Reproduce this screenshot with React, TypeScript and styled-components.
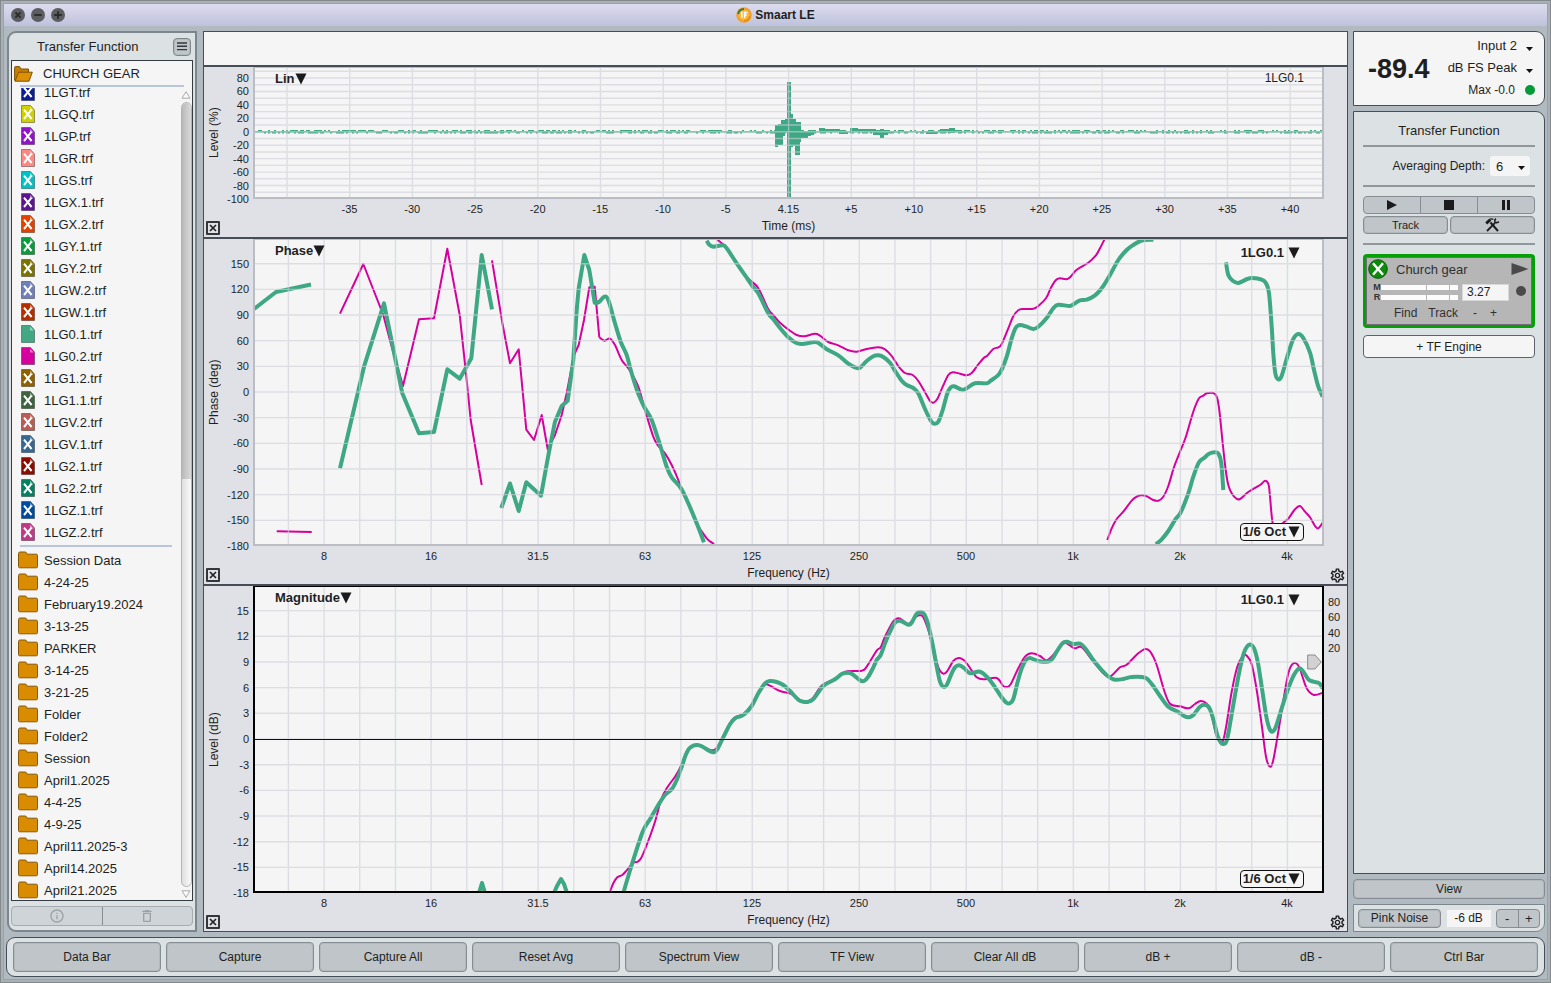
import React from "react";
import styled, { createGlobalStyle, css } from "styled-components";
import { MdDeleteOutline, MdInfoOutline, MdOutlineSettings } from "react-icons/md";

const color = {
  frame: "#b1bac0",
  panel: "#dce1e4",
  plotPanel: "#e0e1e6",
  paper: "#f5f5f5",
  edge: "#454e57",
  softEdge: "#7d868c",
  button: "#bfc5c9",
  text: "#1e1f22",
  green: "#3ea783",
  pink: "#d6009e",
  rule: "#92979c",
};

const GlobalStyle = createGlobalStyle`
  * { box-sizing: border-box; }
  body {
    margin: 0;
    font-family: "Liberation Sans", Arial, sans-serif;
    font-size: 13px;
    color: ${color.text};
    background: ${color.frame};
  }
  button, input, select { font-family: inherit; color: inherit; margin: 0; }
`;

/* ---------- window frame ---------- */

const Window = styled.div`
  height: 100vh;
  min-height: 720px;
  display: flex;
  flex-direction: column;
  background: ${color.frame};
  border: 1px solid #83898d;
  box-shadow: inset 0 0 0 2px #a9b1b6, inset 0 0 0 3px #9aa3a9;
  padding: 3px 5px 5px;
`;

const TitleBar = styled.header`
  height: 22px;
  margin: 0 -2px 5px;
  padding: 0 7px;
  display: grid;
  grid-template-columns: 1fr auto 1fr;
  align-items: center;
  background: linear-gradient(#dcdcee, #bfc2dc);
`;

const TrafficLights = styled.div`
  display: flex;
  gap: 6px;
`;

const TrafficButton = styled.button`
  width: 14px;
  height: 14px;
  padding: 0;
  border: 0;
  border-radius: 50%;
  background: #5b5d60;
  display: flex;
`;

const AppName = styled.h1`
  margin: 0;
  display: flex;
  align-items: center;
  gap: 3px;
  font-size: 12px;
  font-weight: bold;
`;

const Main = styled.main`
  flex: 1;
  min-height: 0;
  display: flex;
  gap: 6px;
  padding-left: 1px;
`;

const buttonLook = css`
  background: ${color.button};
  border: 1px solid #868e93;
  box-shadow: inset 0 0 0 1px #b3babe;
  border-radius: 4px;
  padding: 0;
  display: flex;
  align-items: center;
  justify-content: center;
`;

const PlainButton = styled.button<{ $h?: number; $size?: number }>`
  ${buttonLook}
  height: ${(p) => p.$h ?? 18}px;
  font-size: ${(p) => p.$size ?? 12}px;
`;

/* ---------- data bar ---------- */

const DataBar = styled.aside`
  width: 190px;
  flex: none;
  display: flex;
  flex-direction: column;
  background: ${color.panel};
  border: 2px solid ${color.softEdge};
  border-radius: 9px 0 0 9px;
  padding: 0 2px 4px;
`;

const DataBarHead = styled.div`
  height: 27px;
  display: flex;
  align-items: center;
  justify-content: space-between;
  padding: 0 2px 0 26px;
`;

const PanelTitle = styled.h2<{ $center?: boolean }>`
  margin: 0;
  font-size: 13px;
  line-height: 16px;
  font-weight: normal;
  text-align: ${(p) => (p.$center ? "center" : "left")};
`;

const MenuButton = styled.button`
  ${buttonLook}
  width: 18px;
  height: 18px;
  border-color: #7f878c;
`;

const ListBox = styled.div`
  flex: 1;
  min-height: 0;
  display: flex;
  flex-direction: column;
  border: 1px solid #353d44;
  background: ${color.paper};
`;

const SessionRow = styled.div`
  height: 24px;
  display: flex;
  align-items: center;
  gap: 10px;
  padding: 1px 0 0 2px;
`;

const Divider = styled.hr<{ $inset: number; $gap: number }>`
  flex: none;
  height: 2px;
  border: 0;
  margin: ${(p) => p.$gap}px ${(p) => p.$inset}px ${(p) => p.$gap}px 8px;
  background: #b8c5da;
`;

const ListBody = styled.div`
  flex: 1;
  min-height: 0;
  display: flex;
`;

const ListClip = styled.div`
  flex: 1;
  min-width: 0;
  margin-top: 1px;
  overflow: hidden;
`;

const ListScroll = styled.div`
  margin-top: -7px;
`;

const Items = styled.ul`
  list-style: none;
  margin: 0;
  padding: 0;
`;

const ItemButton = styled.button`
  width: 100%;
  height: 22px;
  padding: 0 0 0 6px;
  border: 0;
  background: none;
  display: grid;
  grid-template-columns: 20px 1fr;
  gap: 6px;
  align-items: center;
  justify-items: start;
  font-size: 13px;
  svg { justify-self: center; }
`;

const ScrollColumn = styled.div`
  width: 12px;
  padding: 4px 0 2px;
  display: flex;
  flex-direction: column;
  align-items: center;
  gap: 3px;
`;

const ScrollTrack = styled.div`
  flex: 1;
  width: 11px;
  border: 1px solid #b3b3b3;
  border-radius: 6px;
  background: linear-gradient(90deg, #dedede, #fafafa);
  overflow: hidden;
`;

const ScrollThumb = styled.div`
  height: 48%;
  border-radius: 5px 5px 0 0;
  background: linear-gradient(90deg, #b9b9b9, #d9d9d9);
`;

const Split = styled.div<{ $h: number; $muted?: boolean; $w?: number }>`
  flex: none;
  display: flex;
  height: ${(p) => p.$h}px;
  ${(p) => (p.$w ? `width: ${p.$w}px;` : "")}
  background: ${(p) => (p.$muted ? "#ced4d8" : color.button)};
  border: 1px solid ${(p) => (p.$muted ? "#a6adb1" : "#868e93")};
  border-radius: 4px;
  color: ${(p) => (p.$muted ? "#9ba2a6" : color.text)};
`;

const SplitButton = styled.button<{ $muted?: boolean }>`
  flex: 1;
  padding: 0;
  border: 0;
  background: none;
  display: flex;
  align-items: center;
  justify-content: center;
  font-size: 13px;
  & + & { border-left: 1px solid ${(p) => (p.$muted ? "#a6adb1" : "#868e93")}; }
`;

/* ---------- plots ---------- */

const PlotArea = styled.section`
  flex: 1;
  min-width: 0;
  display: flex;
  flex-direction: column;
  border: 1px solid ${color.edge};
  background: ${color.plotPanel};
`;

const PlotHeader = styled.div`
  height: 33px;
  flex: none;
  background: ${color.paper};
`;

const Graph = styled.section<{ $grow: number }>`
  flex: ${(p) => p.$grow} 1 0;
  min-height: 0;
  box-sizing: content-box;
  border-top: 2px solid ${color.edge};
  display: grid;
  grid-template-columns: 20px 29px 1fr 23px;
  grid-template-rows: minmax(0, 1fr) 20px 18px;
`;

const YTitle = styled.div`
  writing-mode: vertical-rl;
  transform: rotate(180deg);
  text-align: center;
  font-size: 12px;
  line-height: 20px;
`;

const Plot = styled.div<{ $active?: boolean }>`
  position: relative;
  min-height: 0;
  border: 2px solid ${(p) => (p.$active ? "#000" : "#babdc3")};
  border-top-width: 1px;
  background: ${color.paper};
`;

const Canvas = styled.svg`
  display: block;
  width: 100%;
  height: 100%;
  position: absolute;
  inset: 0;
`;

const Ticks = styled.svg`
  display: block;
  width: 100%;
  height: 100%;
  min-height: 0;
  overflow: visible;
  font-size: 11px;
  fill: ${color.text};
`;

const PlotCaption = styled.div<{ $side: "left" | "right" }>`
  position: absolute;
  top: 3px;
  ${(p) => (p.$side === "left" ? "left: 20px;" : "right: 18px;")}
  font-size: 12px;
  line-height: 14px;
`;

const PlotMenu = styled.button<{ $at: "title" | "trace" | "smoothing" }>`
  position: absolute;
  display: flex;
  align-items: center;
  padding: 0;
  border: 0;
  background: none;
  font-size: 13px;
  font-weight: bold;
  line-height: 16px;
  ${(p) =>
    p.$at === "title" &&
    css`
      top: 3px;
      left: 20px;
    `}
  ${(p) =>
    p.$at === "trace" &&
    css`
      top: 5px;
      right: 22px;
      gap: 4px;
    `}
  ${(p) =>
    p.$at === "smoothing" &&
    css`
      bottom: 3px;
      right: 18px;
      gap: 2px;
      padding: 0 3px 0 2px;
      border: 1px solid #111;
      border-radius: 4px;
      background: ${color.paper};
    `}
`;

const PhaseMarker = styled.svg`
  position: absolute;
  right: 0;
  top: 22%;
`;

const GraphFoot = styled.div`
  grid-column: 1 / -1;
  display: grid;
  grid-template-columns: 49px 1fr 23px;
  align-items: center;
`;

const XTitle = styled.div`
  text-align: center;
  font-size: 12px;
  line-height: 14px;
  align-self: start;
`;

const CloseBox = styled.button`
  width: 14px;
  height: 14px;
  margin-left: 2px;
  padding: 0;
  border: 2px solid #33373c;
  border-radius: 1px;
  background: none;
  display: flex;
`;

const GearButton = styled.button`
  padding: 0;
  border: 0;
  background: none;
  display: flex;
  font-size: 17px;
  margin-left: 5px;
`;

/* ---------- control bar ---------- */

const ControlBar = styled.aside`
  width: 192px;
  flex: none;
  margin-left: -1px;
  display: flex;
  flex-direction: column;
`;

const Meter = styled.section`
  height: 75px;
  flex: none;
  margin-bottom: 5px;
  display: flex;
  align-items: center;
  padding: 0 9px 0 14px;
  background: ${color.paper};
  border: 1px solid ${color.edge};
  border-radius: 0 9px 9px 0;
`;

const Level = styled.output`
  padding-top: 2px;
  font-size: 27px;
  font-weight: bold;
`;

const MeterSide = styled.div`
  flex: 1;
  display: flex;
  flex-direction: column;
  padding-bottom: 2px;
`;

const SelectWrap = styled.div`
  position: relative;
  display: flex;
  align-items: center;
`;

const MeterSelect = styled.select`
  appearance: none;
  width: 100%;
  height: 22px;
  border: 0;
  background: none;
  padding: 0 18px 0 0;
  font-size: 13px;
  text-align: right;
  text-align-last: right;
`;

const CaretMark = styled.svg<{ $right: number }>`
  position: absolute;
  right: ${(p) => p.$right}px;
  bottom: 6px;
  pointer-events: none;
`;

const MaxRow = styled.div`
  height: 22px;
  display: flex;
  align-items: center;
  justify-content: flex-end;
  gap: 10px;
  font-size: 12px;
`;

const Led = styled.span<{ $fill: string }>`
  width: 10px;
  height: 10px;
  border-radius: 50%;
  background: ${(p) => p.$fill};
`;

const TfPanel = styled.section`
  flex: 1;
  min-height: 0;
  display: flex;
  flex-direction: column;
  padding: 11px 9px 0;
  background: ${color.panel};
  border: 1px solid ${color.edge};
  border-radius: 0 9px 0 0;
`;

const Rule = styled.hr<{ $top: number; $bottom: number }>`
  flex: none;
  height: 2px;
  border: 0;
  margin: ${(p) => p.$top}px 0 ${(p) => p.$bottom}px;
  background: ${color.rule};
`;

const DepthRow = styled.div`
  display: flex;
  align-items: center;
  justify-content: flex-end;
  gap: 5px;
  padding-right: 5px;
  font-size: 12px;
`;

const DepthSelect = styled.select`
  appearance: none;
  width: 40px;
  height: 20px;
  border: 0;
  border-radius: 3px;
  background: ${color.paper};
  padding: 0 6px;
  font-size: 13px;
`;

const TrackRow = styled.div`
  display: grid;
  grid-template-columns: 1fr 1fr;
  gap: 2px;
  margin-top: 2px;
`;

const Engine = styled.section`
  height: 74px;
  flex: none;
  border: 3px solid #05a005;
  border-radius: 4px;
  background: #b6b6b6;
  box-shadow: inset 0 0 0 1px #76697a;
  padding: 2px 3px 0 2px;
  display: flex;
  flex-direction: column;
`;

const EngineHead = styled.div`
  height: 20px;
  display: flex;
  align-items: center;
  gap: 8px;
  font-size: 13px;
  color: #303030;
  span { flex: 1; }
`;

const EngineMid = styled.div`
  display: flex;
  align-items: center;
  gap: 4px;
  padding-left: 6px;
  height: 26px;
`;

const Bars = styled.div`
  flex: 1;
  display: flex;
  flex-direction: column;
`;

const BarRow = styled.div`
  display: flex;
  align-items: center;
  gap: 1px;
  font-size: 9px;
  line-height: 10px;
  font-weight: bold;
  color: #333;
  b { width: 6px; display: flex; justify-content: center; }
`;

const BarCell = styled.i<{ $w: number }>`
  flex: ${(p) => p.$w} 1 0;
  height: 5px;
  background: #fcfcfc;
`;

const DelayInput = styled.input`
  width: 47px;
  height: 17px;
  border: 1px solid #d8d8d8;
  background: ${color.paper};
  padding: 0 0 0 4px;
  font-size: 12px;
`;

const EngineFoot = styled.div`
  display: flex;
  padding-left: 26px;
  gap: 11px;
`;

const TextButton = styled.button`
  padding: 0;
  border: 0;
  background: none;
  font-size: 12px;
  line-height: 16px;
  color: #303030;
  min-width: 9px;
`;

const AddEngine = styled.button`
  height: 23px;
  flex: none;
  margin-top: 7px;
  border: 1px solid #5c636a;
  border-radius: 4px;
  background: ${color.paper};
  font-size: 12px;
`;

const ViewButton = styled(PlainButton)`
  margin: 5px 0;
  flex: none;
`;

const Generator = styled.section`
  height: 28px;
  flex: none;
  display: flex;
  align-items: center;
  justify-content: space-between;
  padding: 0 4px;
  background: ${color.panel};
  border: 1px solid ${color.softEdge};
  border-radius: 0 0 9px 0;
`;

const NoiseButton = styled(PlainButton)`
  width: 83px;
`;

const LevelInput = styled.input`
  width: 44px;
  height: 17px;
  border: 0;
  padding: 0;
  background: ${color.paper};
  text-align: center;
  font-size: 12px;
`;

/* ---------- command bar ---------- */

const CommandBar = styled.nav`
  height: 40px;
  flex: none;
  margin-top: 5px;
  display: grid;
  grid-auto-flow: column;
  grid-auto-columns: 1fr;
  gap: 5px;
  align-items: center;
  padding: 0 6px;
  background: ${color.panel};
  border: 1px solid ${color.edge};
  border-radius: 9px;
`;

/* ---------- data ---------- */

const files: [string, string, boolean][] = [
  ["1LGT.trf", "#0c1c92", true],
  ["1LGQ.trf", "#cfd000", true],
  ["1LGP.trf", "#9013c8", true],
  ["1LGR.trf", "#ff8781", true],
  ["1LGS.trf", "#00c2c2", true],
  ["1LGX.1.trf", "#5c1491", true],
  ["1LGX.2.trf", "#e04300", true],
  ["1LGY.1.trf", "#0b9a3c", true],
  ["1LGY.2.trf", "#7a7300", true],
  ["1LGW.2.trf", "#6f7fba", true],
  ["1LGW.1.trf", "#b52e00", true],
  ["1LG0.1.trf", "#42a884", false],
  ["1LG0.2.trf", "#d6009e", false],
  ["1LG1.2.trf", "#8f6000", true],
  ["1LG1.1.trf", "#3e6340", true],
  ["1LGV.2.trf", "#b85c55", true],
  ["1LGV.1.trf", "#37688f", true],
  ["1LG2.1.trf", "#8c0c00", true],
  ["1LG2.2.trf", "#078062", true],
  ["1LGZ.1.trf", "#004a9f", true],
  ["1LGZ.2.trf", "#bf3a86", true],
];

const folders = [
  "Session Data", "4-24-25", "February19.2024", "3-13-25", "PARKER", "3-14-25", "3-21-25", "Folder",
  "Folder2", "Session", "April1.2025", "4-4-25", "4-9-25", "April11.2025-3", "April14.2025", "April21.2025",
];

const commands = [
  "Data Bar", "Capture", "Capture All", "Reset Avg", "Spectrum View", "TF View", "Clear All dB", "dB +", "dB -", "Ctrl Bar",
];

type Frame = { x: number; y: number; w: number; h: number };
type Trace = { pts: string; pink?: boolean; smooth?: boolean };
type Tick = [string, number];

const irFrame: Frame = { x: 255, y: 68, w: 1067, h: 129 };
const phaseFrame: Frame = { x: 255, y: 240, w: 1067, h: 304 };
const magFrame: Frame = { x: 255, y: 587, w: 1067, h: 304 };

const range = (n: number, start: number, step: number) => Array.from({ length: n }, (_, i) => start + i * step);

const octaveLines = range(30, 288.4, 35.68);
const octaveTicks: Tick[] = ["8", "16", "31.5", "63", "125", "250", "500", "1k", "2k", "4k"].map((t, i) => [t, 324 + i * 107]);
const timeLines = range(17, 287, 62.7);
const timeTicks: Tick[] = ["-35", "-30", "-25", "-20", "-15", "-10", "-5", "4.15", "+5", "+10", "+15", "+20", "+25", "+30", "+35", "+40"].map(
  (t, i) => [t, 349.5 + i * 62.7]
);

const irTicks: Tick[] = [80, 60, 40, 20, 0, -20, -40, -60, -80, -100].map((v) => [String(v), 131.8 - v * 0.672]);
const irLines = range(19, 71.3, 6.72);
const phaseTicks: Tick[] = range(12, 150, -30).map((v) => [String(v), 392 - v * 0.8555]);
const magTicks: Tick[] = range(12, 15, -3).map((v) => [String(v), 739 - v * 8.56]);
const coherenceTicks: Tick[] = [["80", 602], ["60", 617], ["40", 633], ["20", 648]];

const phaseTraces: Trace[] = [
  { pink: true, pts: "276.7,531.3 311.7,532" },
  { pink: true, pts: "340,313.7 363.3,264 383.3,315 391.7,346.7 403,386 419,319.3 434,318.3 447.3,248.7 459.7,315 466,373.3 470.7,420 481.7,485" },
  { pink: true, pts: "492,260.3 502.3,322.7 510,363.3 518.7,349.3 526.3,429.7 534,440 541.7,415 547.7,449.3 555,435 561.7,415 566.7,393.3 574,355 578.7,345 584,320 589.3,287.3 594.7,286.7 599.3,337.3" },
  { pink: true, smooth: true, pts: "599.3,337.3 604.3,340.7 610,338.7 615,345 621.7,360 630,370.7 638.3,386.7 645,410 653.3,436.7 658.3,446 665,453.3 671.7,465 678.3,480 681,488.3 688.3,503.3 696.7,523.3 706.7,538.3 714,544" },
  { pink: true, smooth: true, pts: "717.3,239.7 722.7,244 726.7,248 736.7,263 747.3,277.7 756.7,286 761.7,295 768.3,309.3 773.3,315 780,322.7 790,330.7 796.7,335 804,336.3 815,333.7 820,335.7 828.3,342 838.3,345.3 848.3,350.3 856.7,351.7 866.7,349 878.3,347.3 885,349.3 891.7,356 898.3,366 905,373 912.7,375 918.3,381 925,392.3 930,401 933.3,402.7 937.3,399 942.7,386.7 948.3,375 952.7,372.3 960,373.7 966.7,375.3 971.7,373 978.3,364.3 984,357.7 987.3,355.7 993.3,349 998.3,347.3 1001.7,344 1008.3,328.3 1013.3,316.3 1018.3,310.3 1023.3,309 1033.3,308.7 1038.3,306 1046,298.3 1050.7,288.3 1055.7,280.3 1060,278.3 1068.3,278.7 1076.7,269.7 1088.3,262.7 1095.7,255.7 1100,248.3 1104.3,239.7" },
  { pink: true, smooth: true, pts: "1107.3,540 1111.7,528.3 1116.7,519 1123.3,511.7 1131.7,500.7 1136.7,496.7 1141.7,495.3 1146.7,496.3 1153.3,500 1158.3,500.7 1163.3,496.7 1168.3,486 1173.3,469.3 1176.7,460 1180.7,450 1185.7,437.3 1193.3,411.7 1199,398.3 1203.3,395.7 1206.7,393.3 1213.3,393 1216.7,396.7 1219.3,410 1222.7,443.3 1225.7,470 1228.3,485 1231.7,493.3 1236,498.3 1240,499 1248.3,492 1260,485 1265.3,480.7 1268.7,485 1270,496.7 1272.7,523.3 1277,529 1283.3,522.7 1288.3,518.7 1295,509.3 1300,506 1305,511.7 1310,517.3 1315,526 1318.3,528.3 1322.7,522.7" },
  { pts: "254,309 276,292 311,284.5" },
  { pts: "340,468.3 364,366.7 384,303.3 402.3,393.3 419,433.3 434,432 447.3,369.3 459.7,378.7 471.3,358.3 481.7,255 492,309.3" },
  { pts: "501.3,508 510,483.5 518.7,511 526.3,482.3 541,495.7 548.7,453.3 555,421.7 561.7,406 567.7,400.7 573.3,360 576.7,310 578.7,288.3 584.3,255 589.3,270 594.7,302.7 599,302" },
  { smooth: true, pts: "594.7,302.7 599,302 604.3,296.7 608.3,300 615,323.3 620.7,341.7 626.7,355 630.7,370 636.7,389.3 641.7,401.7 645,408.3 651.7,420 660,445 666.7,466.7 671.7,477.3 681,488.3 688.3,503.3 696.7,523.3 704,542.3" },
  { smooth: true, pts: "706.7,240.7 709.3,244.7 713.3,246.7 722.7,245.3 726.7,248.3 736.7,263.3 748.3,280 752.3,286 758.3,293.3 768.3,313.3 773.3,319.3 781.7,330 788.3,337.3 795,342.3 801.7,344 815,342 820,344 826.7,349.3 838.3,355.3 848.3,363.7 855,367.3 860,367.7 866.7,361 873.3,356.3 878.3,355.3 883.3,357 890,362.7 895.3,371.3 901.7,380.7 906.7,385 913.3,388 918.3,393.3 925,409 931,421 934.3,423.7 938.3,421.7 942.7,410 947.3,393.3 950.7,387.3 954,386.3 960,389 963.3,389.7 966.7,388.3 975,383.3 986.7,383.3 990.7,380.7 998.3,375 1002.3,368.3 1006.7,356.7 1011.7,338.3 1015.7,327.7 1020,325 1026.7,326.7 1033.3,329 1038.3,326.7 1046.7,318 1053.3,308.3 1058.3,304.7 1070,306 1075,303.3 1080,300.3 1086.7,299.7 1095,295.3 1101.7,288.3 1110,275 1118.3,260 1126.7,250 1133.3,245 1141.7,240.5 1153.3,239.7" },
  { smooth: true, pts: "1226,262.3 1228.3,275 1232.7,280.7 1238.3,283 1247.3,279 1252.3,278 1261.7,279.7 1266,283.3 1269,293.3 1271.7,326.7 1273.3,353.3 1275.3,373.3 1278.3,379.3 1281.7,375.7 1288.3,353.3 1293.3,339 1298.3,334 1303.3,338 1310,352.7 1314,370 1318.3,386.7 1322.7,396.7" },
  { smooth: true, pts: "1156,544.3 1161.7,539.3 1168.3,531 1175,520 1180.7,512.3 1188.3,493.3 1193.3,476.7 1199,462.3 1205,457.3 1209,453.7 1215,452.3 1218.7,454 1221.3,463.3 1223.3,490" },
];

const magTraces: Trace[] = [
  { pink: true, smooth: true, pts: "610,891.7 613.3,883.3 617.3,877.3 622.3,875 626.7,870.3 633.3,862.7 637.3,862 641,858.3 646.7,845 655,821.7 661,800 666.7,788.3 675,776.7 680.7,766.7 685.7,755 689,748.7 693.3,745.7 697.3,745 701.7,746.3 710,750 714,750 717.3,747 723.3,736 730,723 735,717.3 743.3,714 751.7,705.3 758.3,693 765,684.7 770,685.7 780,691 791.7,694 798.3,699 803.3,701.7 808.3,701.7 813.3,697.7 820,687.3 825,683.3 835,679 841.7,673.5 847.3,671.3 861.7,670.7 866.7,666.7 876.7,650.7 880.7,647.3 885,636.7 893.3,621.3 898.3,618.3 902.7,620.3 908.3,624.3 916,616.7 920,615.3 923.3,617.3 928.3,630 933.3,648 938.3,667.3 943.3,673.7 947.3,671 953.3,661 958.7,658 963.3,659.7 968,665 976.7,677.3 985,679.3 996.7,678 1003.3,686 1006.7,687 1010.7,684.3 1018.3,668.3 1025,656.7 1031.7,653.3 1040,656 1047.3,660.3 1056.7,651 1062,644.5 1066.7,643.3 1074.3,648.3 1081.7,647.3 1093.3,661.7 1103.3,673.3 1110,676.7 1120,667.3 1126.7,664.7 1138.3,653.3 1145.7,649 1150.7,652.3 1156.7,665 1164,690 1170,703.7 1180,706.3 1188.7,708.3 1195,704 1200.7,701 1206.7,703.7 1210.7,711.7 1216,734 1220,742 1223.3,740 1226.7,723.3 1231.7,691.7 1237.3,666.7 1242.7,656.3 1246.7,655.7 1251.7,664.3 1256.7,690 1261.7,725 1266,756.7 1270,766.7 1273.3,760 1278.3,731.7 1284,696.7 1288.3,673.3 1291.7,665 1295,663 1299.3,667.3 1306.7,688.3 1314,695 1322.7,692.7" },
  { pts: "479,893 482,883 485,893" },
  { pts: "554,893 557,886 561,879 564,884 567,893" },
  { smooth: true, pts: "623.3,893 631.7,865 642.7,831.7 650,819.3 658.3,805 665,795 671.7,789.3 676.7,780 681.7,766.7 685.7,755 689,748.7 693.3,745.7 697.3,745 701.7,746.3 710,751.3 714,752.3 717.3,749.3 723.3,737.3 730,724.3 735,718.3 743.3,715 751.7,706 758.3,693.3 765,683.3 770,681 776.7,682 783.3,685 790,691 798.3,699.7 803.3,701.7 808.3,701.7 813.3,699 820,690 825,684.7 835,679.3 841.7,674 847.3,672.7 851.7,673.7 860,680.3 864,681 868.3,676.7 873.3,667.3 876.7,660 880.7,655 885,643.3 890,631.7 895,622.7 900,620.7 908.3,624.7 911.7,622.7 916.7,613.7 920.7,612 924.3,614.3 928.3,625 932.7,645 936.7,666.7 940,681.7 943.3,686.7 946.7,685 951.7,673.3 955,667.3 959,665.3 964,668 970,673.3 980,671.7 988.3,678.3 995,687.3 1001.7,697.3 1006,702.3 1010,703.3 1013.3,699 1017.3,683.3 1021.7,668.3 1026,660 1030,658 1038.3,661 1050,661 1056.7,651.7 1062.3,643.3 1066.7,641.7 1073.3,644 1080,643.7 1085,648 1093.3,660 1101.7,670 1109,677 1115,679.7 1123.3,679 1131.7,677 1145,677.7 1151.7,684 1160,696 1168.3,706.7 1178.3,712 1184,716 1188.7,717.3 1193.3,715 1200,706.7 1206,705 1210,709.3 1214,721.7 1217.3,735 1220.7,742.3 1223.3,744 1226.7,740.7 1230.7,720 1235,695 1240,668.3 1244,652.7 1247.3,646.3 1250.7,644.7 1254,648.3 1257.7,661.7 1261.7,686.7 1266,715 1269.3,728.3 1272.3,731.7 1275.7,727.3 1281.7,708.3 1288.3,688.3 1294.3,674.3 1299.3,668.3 1303.3,671.7 1308.3,679.3 1313.3,681.7 1319.3,683.3 1322.7,688.3" },
];

/* Straight segments, or a Catmull-Rom spline through the points. */
function tracePath({ pts, smooth }: Trace) {
  const p = pts.split(" ").map((s) => s.split(",").map(Number));
  if (!smooth) return "M" + p.map((q) => q.join(",")).join("L");
  let d = `M${p[0]}`;
  for (let i = 0; i < p.length - 1; i++) {
    const a = p[i - 1] ?? p[i];
    const b = p[i];
    const c = p[i + 1];
    const e = p[i + 2] ?? c;
    d += `C${b[0] + (c[0] - a[0]) / 6},${b[1] + (c[1] - a[1]) / 6} ${c[0] - (e[0] - b[0]) / 6},${c[1] - (e[1] - b[1]) / 6} ${c}`;
  }
  return d;
}

/* Impulse response: noise floor plus the arrival around 4.15 ms. */
const bursts: [number, number, number, number][] = [
  [775, 125, 778, 147], [778, 124, 783, 145], [781, 120, 785, 136], [785, 119, 788, 132], [787, 82, 791, 198],
  [790, 114, 793, 147], [793, 119, 796, 146], [796, 122, 801, 142], [795, 130, 800, 155], [801, 131, 808, 138],
  [808, 131, 811, 136], [811, 130, 814, 135], [819, 128, 825, 132], [825, 129, 840, 132], [839, 131, 848, 134],
  [850, 128, 858, 132], [858, 129, 876, 132], [873, 131, 880, 135], [880, 129, 884, 138], [884, 131, 888, 135],
  [926, 131, 937, 134], [940, 129, 949, 132], [949, 128, 955, 133], [955, 130, 962, 132],
];

const noisePath = (() => {
  let seed = 11;
  const rnd = () => (seed = (seed * 16807) % 2147483647) / 2147483647;
  let top = "";
  let bottom = "";
  for (let x = 254; x < 1324; x += 2) {
    const t = 131 - (rnd() > 0.5 ? 1 : 0);
    const b = 132.6 + (rnd() > 0.5 ? 1 : 0);
    top += `L${x},${t}H${x + 2}`;
    bottom = `L${x + 2},${b}H${x}` + bottom;
  }
  return "M254,132" + top + bottom + "Z";
})();

/* ---------- small drawings ---------- */

const DownTriangle = () => (
  <svg width="12" height="12" viewBox="0 0 12 12" aria-hidden="true">
    <path d="M0.5 0.5H11.5L6 11.5Z" fill="#1b1b1d" />
  </svg>
);

const Caret = ({ right = 2 }: { right?: number }) => (
  <CaretMark $right={right} width="7" height="4" viewBox="0 0 7 4" aria-hidden="true">
    <path d="M0 0H7L3.5 4Z" fill="#111" />
  </CaretMark>
);

const FileIcon = ({ fill, crossed }: { fill: string; crossed: boolean }) => (
  <svg width="14" height="18" viewBox="0 0 14 18" aria-hidden="true">
    <path d="M0.5 0.5H9.5L13.5 5V17.5H0.5Z" fill={fill} stroke="#000" strokeOpacity="0.35" />
    <path d="M9 1.5V5.5H12.8Z" fill="#fff" fillOpacity="0.45" />
    {crossed && <path d="M3 4.6L10.6 14M10.6 4.6L3 14" stroke="#fff" strokeWidth="2" />}
  </svg>
);

const FolderIcon = () => (
  <svg width="20" height="18" viewBox="0 0 20 18" aria-hidden="true">
    <path
      d="M0.5 2.5Q0.5 1 2 1H7Q8.2 1 8.5 2L9 3.2H18.3Q19.5 3.2 19.5 4.4V15.6Q19.5 16.8 18.3 16.8H1.7Q0.5 16.8 0.5 15.6Z"
      fill="#d98c00"
      stroke="#86590a"
    />
  </svg>
);

const OpenFolderIcon = () => (
  <svg width="19" height="16" viewBox="0 0 19 16" aria-hidden="true">
    <path d="M0.6 14.5V1.5Q0.6 0.6 1.5 0.6H5.5L7 3H14.5V6" fill="#c67d00" stroke="#7d5205" />
    <path d="M1 15.2L4.6 6.2H18.3L15 15.2Z" fill="#dd9005" stroke="#7d5205" strokeLinejoin="round" />
  </svg>
);

const ScrollArrow = ({ down }: { down?: boolean }) => (
  <svg width="10" height="8" viewBox="0 0 10 8" aria-hidden="true">
    <path d={down ? "M1 0.8H9L5 7.3Z" : "M1 7.2H9L5 0.7Z"} fill="#fafafa" stroke="#aaa" />
  </svg>
);

const LogoIcon = () => (
  <svg width="16" height="16" viewBox="0 0 16 16" aria-hidden="true">
    <circle cx="8" cy="8" r="7.8" fill="#f2a12c" />
    <circle cx="8" cy="8" r="5.4" fill="#f7b93c" />
    <path d="M2.2 7A6 6 0 0 1 8 2.1" fill="none" stroke="#2a7d5a" strokeWidth="2" />
    <path d="M13.8 9A6 6 0 0 1 8 13.9" fill="none" stroke="#e58a1a" strokeWidth="1.6" />
    <path d="M5.8 5V10.8M8.6 11V5.4H11.4M8.6 8H10.8" stroke="#fff" strokeWidth="1.5" fill="none" />
  </svg>
);

const ToolsIcon = () => (
  <svg width="15" height="14" viewBox="0 0 15 14" aria-hidden="true" fill="none" stroke="#1b1b1d">
    <path d="M5.5 4.5L13 13" strokeWidth="2" />
    <path d="M1.2 5.4L5.4 1.6" strokeWidth="2.8" />
    <path d="M5 1.1Q6.8 0.5 8.4 1.4" strokeWidth="1.1" />
    <path d="M2 13L10 4.8" strokeWidth="1.8" />
    <path d="M10.9 0.7Q9 2.4 9.9 4.1Q11.6 5.4 13.9 3.6" strokeWidth="1.6" />
  </svg>
);

const EngineBadge = () => (
  <svg width="20" height="20" viewBox="0 0 20 20" aria-hidden="true">
    <circle cx="10" cy="10" r="9.3" fill="#0b8a0b" stroke="#0a5d0a" />
    <path d="M5 4.2L15 15.8M15 4.2L5 15.8" stroke="#fff" strokeWidth="2.4" />
  </svg>
);

const boxCross = (
  <svg width="10" height="10" viewBox="0 0 10 10" aria-hidden="true">
    <path d="M2 2L8 8M8 2L2 8" stroke="#222" strokeWidth="1.7" />
  </svg>
);

/* ---------- plot pieces ---------- */

const YTicks = ({ ticks, frame, right }: { ticks: Tick[]; frame: Frame; right?: boolean }) => (
  <Ticks aria-hidden="true">
    {ticks.map(([label, y]) => (
      <text
        key={label}
        x={right ? 4 : 25}
        y={`${((y - frame.y + 1) / (frame.h + 3)) * 100}%`}
        dy="4"
        textAnchor={right ? "start" : "end"}
      >
        {label}
      </text>
    ))}
  </Ticks>
);

const XTicks = ({ ticks, frame }: { ticks: Tick[]; frame: Frame }) => (
  <Ticks aria-hidden="true">
    {ticks.map(([label, x]) => (
      <text key={label} x={`${((x - frame.x + 2) / (frame.w + 4)) * 100}%`} y="14" textAnchor="middle">
        {label}
      </text>
    ))}
  </Ticks>
);

type GraphViewProps = {
  grow: number;
  yTitle: string;
  xTitle: string;
  frame: Frame;
  xTicks: Tick[];
  yTicks: Tick[];
  rightTicks?: Tick[];
  xLines: number[];
  yLines: number[];
  traces?: Trace[];
  active?: boolean;
  zeroAt?: number;
  gear?: boolean;
  drawing?: React.ReactNode;
  children?: React.ReactNode;
};

const GraphView = (g: GraphViewProps) => {
  const { frame: f } = g;
  const grid = [...g.xLines.map((x) => `M${x},${f.y}V${f.y + f.h}`), ...g.yLines.map((y) => `M${f.x},${y}H${f.x + f.w}`)].join("");
  return (
    <Graph $grow={g.grow}>
      <YTitle>{g.yTitle}</YTitle>
      <YTicks ticks={g.yTicks} frame={f} />
      <Plot $active={g.active}>
        <Canvas viewBox={`${f.x} ${f.y} ${f.w} ${f.h}`} preserveAspectRatio="none" role="img" aria-label={g.yTitle}>
          {g.traces?.map((t, i) => (
            <path
              key={i}
              d={tracePath(t)}
              fill="none"
              stroke={t.pink ? color.pink : color.green}
              strokeWidth={t.pink ? 2 : 4}
              strokeLinejoin="round"
              vectorEffect="non-scaling-stroke"
            />
          ))}
          {g.drawing}
          <path d={grid} fill="none" stroke="#cdd0d8" strokeOpacity="0.62" strokeWidth="1.4" vectorEffect="non-scaling-stroke" />
          {g.zeroAt && <path d={`M${f.x},${g.zeroAt}H${f.x + f.w}`} stroke="#111" vectorEffect="non-scaling-stroke" />}
        </Canvas>
        {g.children}
      </Plot>
      {g.rightTicks ? <YTicks ticks={g.rightTicks} frame={f} right /> : <span />}
      <span />
      <span />
      <XTicks ticks={g.xTicks} frame={f} />
      <span />
      <GraphFoot>
        <CloseBox type="button" aria-label="Close graph">
          {boxCross}
        </CloseBox>
        <XTitle>{g.xTitle}</XTitle>
        {g.gear && (
          <GearButton type="button" aria-label="Graph settings">
            <MdOutlineSettings />
          </GearButton>
        )}
      </GraphFoot>
    </Graph>
  );
};

/* ---------- page ---------- */

const FootSplit = styled(Split)`
  margin-top: 5px;
`;

const DataBarFoot = () => (
  <FootSplit $h={20} $muted>
    <SplitButton type="button" aria-label="Info" $muted>
      <MdInfoOutline size={16} />
    </SplitButton>
    <SplitButton type="button" aria-label="Delete" $muted>
      <MdDeleteOutline size={16} />
    </SplitButton>
  </FootSplit>
);

const DataBarView = () => (
  <DataBar>
    <DataBarHead>
      <PanelTitle>Transfer Function</PanelTitle>
      <MenuButton type="button" aria-label="Menu">
        <svg width="10" height="9" viewBox="0 0 10 9" aria-hidden="true">
          <path d="M0 1H10M0 4.3H10M0 7.6H10" stroke="#33383c" strokeWidth="1.4" />
        </svg>
      </MenuButton>
    </DataBarHead>
    <ListBox>
      <SessionRow>
        <OpenFolderIcon />
        CHURCH GEAR
      </SessionRow>
      <Divider $inset={8} $gap={0} />
      <ListBody>
        <ListClip>
          <ListScroll>
            <Items>
              {files.map(([name, fill, crossed]) => (
                <li key={name}>
                  <ItemButton type="button">
                    <FileIcon fill={fill} crossed={crossed} />
                    {name}
                  </ItemButton>
                </li>
              ))}
            </Items>
            <Divider $inset={8} $gap={2} />
            <Items>
              {folders.map((name) => (
                <li key={name}>
                  <ItemButton type="button">
                    <FolderIcon />
                    {name}
                  </ItemButton>
                </li>
              ))}
            </Items>
          </ListScroll>
        </ListClip>
        <ScrollColumn>
          <ScrollArrow />
          <ScrollTrack>
            <ScrollThumb />
          </ScrollTrack>
          <ScrollArrow down />
        </ScrollColumn>
      </ListBody>
    </ListBox>
    <DataBarFoot />
  </DataBar>
);

const ControlBarView = () => (
  <ControlBar>
    <Meter>
      <Level>-89.4</Level>
      <MeterSide>
        <SelectWrap>
          <MeterSelect aria-label="Input">
            <option>Input 2</option>
          </MeterSelect>
          <Caret />
        </SelectWrap>
        <SelectWrap>
          <MeterSelect aria-label="Meter units">
            <option>dB FS Peak</option>
          </MeterSelect>
          <Caret />
        </SelectWrap>
        <MaxRow>
          Max -0.0
          <Led $fill="#049a38" />
        </MaxRow>
      </MeterSide>
    </Meter>
    <TfPanel>
      <PanelTitle $center>Transfer Function</PanelTitle>
      <Rule $top={6} $bottom={9} />
      <DepthRow>
        <label htmlFor="depth">Averaging Depth:</label>
        <SelectWrap>
          <DepthSelect id="depth">
            <option>6</option>
          </DepthSelect>
          <Caret right={5} />
        </SelectWrap>
      </DepthRow>
      <Rule $top={9} $bottom={9} />
      <Split $h={18}>
        <SplitButton type="button" aria-label="Play">
          <svg width="10" height="10" viewBox="0 0 10 10"><path d="M0 0L10 5L0 10Z" fill="#1b1b1d" /></svg>
        </SplitButton>
        <SplitButton type="button" aria-label="Stop">
          <svg width="10" height="10" viewBox="0 0 10 10"><path d="M0 0H10V10H0Z" fill="#1b1b1d" /></svg>
        </SplitButton>
        <SplitButton type="button" aria-label="Pause">
          <svg width="10" height="10" viewBox="0 0 10 10"><path d="M1 0H4V10H1ZM6 0H9V10H6Z" fill="#1b1b1d" /></svg>
        </SplitButton>
      </Split>
      <TrackRow>
        <PlainButton type="button" $size={11}>Track</PlainButton>
        <PlainButton type="button" aria-label="Tools">
          <ToolsIcon />
        </PlainButton>
      </TrackRow>
      <Rule $top={9} $bottom={9} />
      <Engine>
        <EngineHead>
          <EngineBadge />
          <span>Church gear</span>
          <svg width="18" height="12" viewBox="0 0 18 12" aria-hidden="true">
            <path d="M0.5 0L17.5 6L0.5 12Z" fill="#4a4a4a" />
          </svg>
        </EngineHead>
        <EngineMid>
          <Bars>
            {["M", "R"].map((ch) => (
              <BarRow key={ch}>
                <b>{ch}</b>
                <BarCell $w={46} />
                <BarCell $w={22} />
                <BarCell $w={8} />
              </BarRow>
            ))}
          </Bars>
          <DelayInput aria-label="Delay" defaultValue="3.27" />
          <svg width="16" height="12" viewBox="0 0 16 12" aria-hidden="true">
            <circle cx="8" cy="5" r="5" fill="#4a4a4a" />
          </svg>
        </EngineMid>
        <EngineFoot>
          <TextButton type="button">Find</TextButton>
          <TextButton type="button">Track</TextButton>
          <TextButton type="button">&nbsp;-</TextButton>
          <TextButton type="button">+</TextButton>
        </EngineFoot>
      </Engine>
      <AddEngine type="button">+ TF Engine</AddEngine>
    </TfPanel>
    <ViewButton type="button" $h={20}>View</ViewButton>
    <Generator>
      <NoiseButton type="button" $h={19}>Pink Noise</NoiseButton>
      <LevelInput aria-label="Generator level" defaultValue="-6 dB" />
      <Split $h={19} $w={44}>
        <SplitButton type="button">-</SplitButton>
        <SplitButton type="button">+</SplitButton>
      </Split>
    </Generator>
  </ControlBar>
);

const lights = [
  ["Close", "M4.4 4.4L9.6 9.6M9.6 4.4L4.4 9.6"],
  ["Minimize", "M3.2 7H10.8"],
  ["Zoom", "M3.2 7H10.8M7 3.2V10.8"],
];

export default function App() {
  return (
    <>
      <GlobalStyle />
      <Window>
        <TitleBar>
          <TrafficLights>
            {lights.map(([label, d]) => (
              <TrafficButton key={label} type="button" aria-label={label}>
                <svg width="14" height="14" viewBox="0 0 14 14" aria-hidden="true">
                  <path d={d} stroke="#2a2b2d" strokeWidth="1.8" />
                </svg>
              </TrafficButton>
            ))}
          </TrafficLights>
          <AppName>
            <LogoIcon />
            Smaart LE
          </AppName>
        </TitleBar>
        <Main>
          <DataBarView />
          <PlotArea>
            <PlotHeader />
            <GraphView
              grow={170}
              yTitle="Level (%)"
              xTitle="Time (ms)"
              frame={irFrame}
              xTicks={timeTicks}
              yTicks={irTicks}
              xLines={timeLines}
              yLines={irLines}
              drawing={
                <g fill={color.green}>
                  <path d={noisePath} />
                  {bursts.map(([x1, y1, x2, y2]) => (
                    <rect key={`${x1}-${y1}`} x={x1} y={y1} width={x2 - x1} height={y2 - y1} />
                  ))}
                </g>
              }
            >
              <PlotMenu type="button" $at="title">
                Lin
                <DownTriangle />
              </PlotMenu>
              <PlotCaption $side="right">1LG0.1</PlotCaption>
            </GraphView>
            <GraphView
              grow={345}
              yTitle="Phase (deg)"
              xTitle="Frequency (Hz)"
              frame={phaseFrame}
              xTicks={octaveTicks}
              yTicks={phaseTicks}
              xLines={octaveLines}
              yLines={phaseTicks.slice(0, 11).map((t) => t[1])}
              traces={phaseTraces}
              gear
            >
              <PlotMenu type="button" $at="title">
                Phase
                <DownTriangle />
              </PlotMenu>
              <PlotMenu type="button" $at="trace">
                1LG0.1
                <DownTriangle />
              </PlotMenu>
              <PlotMenu type="button" $at="smoothing">
                1/6 Oct
                <DownTriangle />
              </PlotMenu>
            </GraphView>
            <GraphView
              grow={345}
              yTitle="Level (dB)"
              xTitle="Frequency (Hz)"
              frame={magFrame}
              xTicks={octaveTicks}
              yTicks={magTicks}
              rightTicks={coherenceTicks}
              xLines={octaveLines}
              yLines={magTicks.slice(0, 11).map((t) => t[1])}
              traces={magTraces}
              zeroAt={739.5}
              active
              gear
            >
              <PlotMenu type="button" $at="title">
                Magnitude
                <DownTriangle />
              </PlotMenu>
              <PlotMenu type="button" $at="trace">
                1LG0.1
                <DownTriangle />
              </PlotMenu>
              <PlotMenu type="button" $at="smoothing">
                1/6 Oct
                <DownTriangle />
              </PlotMenu>
              <PhaseMarker width="15" height="16" viewBox="0 0 15 16" aria-hidden="true">
                <path d="M0.7 1H8L14.3 8L8 15H0.7Z" fill="#d2d2d2" stroke="#8b8b8b" />
              </PhaseMarker>
            </GraphView>
          </PlotArea>
          <ControlBarView />
        </Main>
        <CommandBar>
          {commands.map((c) => (
            <PlainButton key={c} type="button" $h={30}>
              {c}
            </PlainButton>
          ))}
        </CommandBar>
      </Window>
    </>
  );
}
